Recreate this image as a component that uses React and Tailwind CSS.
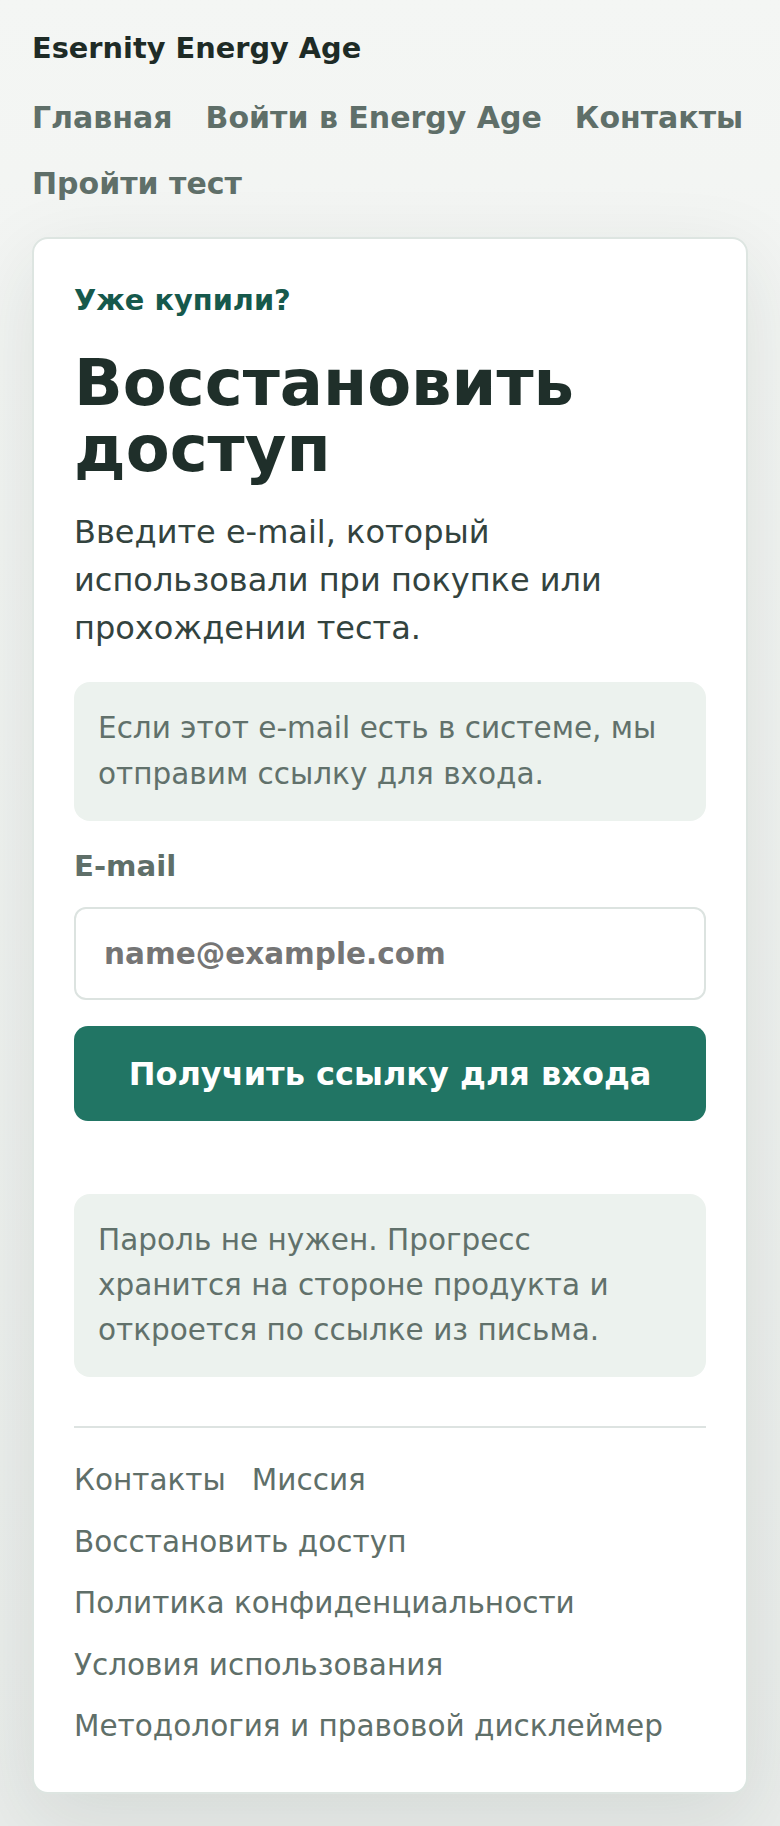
import React from 'react';

const navLinks = ['Главная', 'Войти в Energy Age', 'Контакты', 'Пройти тест'];
const footerLinks = [
  'Контакты',
  'Миссия',
  'Восстановить доступ',
  'Политика конфиденциальности',
  'Условия использования',
  'Методология и правовой дисклеймер',
];

export default function App() {
  return (
    <div className="min-h-[1826px] bg-gradient-to-b from-[#f4f6f4] to-[#e9ecea] px-[32px] pt-[27px] pb-[36px] font-['DejaVu_Sans',sans-serif]">
      {/* header */}
      <header>
        <div className="text-[28.8px] leading-[42px] font-bold text-[#1e2b26]">Esernity Energy Age</div>
        <nav className="mt-[27px] flex flex-wrap gap-x-[33px] gap-y-[22px]">
          {navLinks.map((l) => (
            <a key={l} href="#" className="text-[30px] leading-[44px] font-bold text-[#5f6f69] whitespace-nowrap">
              {l}
            </a>
          ))}
        </nav>
      </header>

      {/* card */}
      <main className="mt-[31px] rounded-[16px] border-2 border-[#dde5e1] bg-white px-[40px] pt-[40px] pb-[43px] shadow-[0_24px_80px_rgba(31,47,42,0.10)]">
        <p className="text-[28.8px] leading-[42px] font-bold text-[#16594c]">Уже купили?</p>
        <h1 className="mt-[29px] text-[64px] leading-[66px] font-bold text-[#1f2f2a]">
          Восстановить доступ
        </h1>
        <p className="mt-[26px] text-[32px] leading-[48px] text-[#33433e]">
          Введите e-mail, который использовали при покупке или прохождении теста.
        </p>

        <div className="mt-[30px] rounded-[16px] bg-[#ecf2ee] px-[24px] py-[24px] text-[29.5px] leading-[45.5px] text-[#61716b]">
          Если этот e-mail есть в системе, мы отправим ссылку для входа.
        </div>

        <form onSubmit={(e) => e.preventDefault()}>
          <label htmlFor="email" className="mt-[24px] block text-[29.2px] leading-[42px] font-bold text-[#5f6f69]">
            E-mail
          </label>
          <input
            id="email"
            type="email"
            placeholder="name@example.com"
            className="mt-[20px] block h-[93px] w-full rounded-[12px] border-2 border-[#dce3e0] bg-white px-[28px] text-[29.5px] font-bold text-[#1f2f2a] placeholder:text-[#757575] outline-none"
          />
          <button
            type="submit"
            className="mt-[26px] flex h-[95px] w-full items-center justify-center rounded-[14px] bg-[#217564] text-[32px] font-bold text-white"
          >
            Получить ссылку для входа
          </button>
        </form>

        <div className="mt-[73px] rounded-[16px] bg-[#ecf2ee] px-[24px] py-[24px] text-[29.5px] leading-[45px] text-[#61716b]">
          Пароль не нужен. Прогресс хранится на стороне продукта и откроется по ссылке из письма.
        </div>

        <footer className="mt-[49px] border-t-2 border-[#dde3e1] pt-[30px]">
          <div className="flex flex-wrap gap-x-[26px] gap-y-[16.5px]">
            {footerLinks.map((l) => (
              <a key={l} href="#" className="text-[29.5px] leading-[45px] text-[#5f6f69] whitespace-nowrap">
                {l}
              </a>
            ))}
          </div>
        </footer>
      </main>
    </div>
  );
}
